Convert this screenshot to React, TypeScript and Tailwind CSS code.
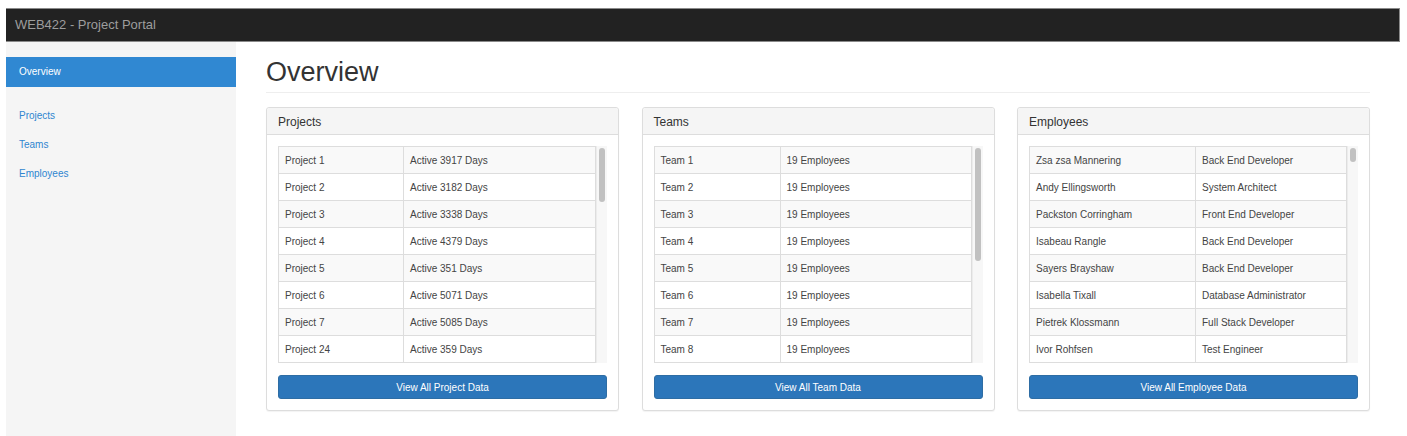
const projects = [
  ['Project 1', 'Active 3917 Days'],
  ['Project 2', 'Active 3182 Days'],
  ['Project 3', 'Active 3338 Days'],
  ['Project 4', 'Active 4379 Days'],
  ['Project 5', 'Active 351 Days'],
  ['Project 6', 'Active 5071 Days'],
  ['Project 7', 'Active 5085 Days'],
  ['Project 24', 'Active 359 Days'],
  ['', ''],
]

const teams = [...Array.from({ length: 8 }, (_, i) => [`Team ${i + 1}`, '19 Employees']), ['', '']]

const employees = [
  ['Zsa zsa Mannering', 'Back End Developer'],
  ['Andy Ellingsworth', 'System Architect'],
  ['Packston Corringham', 'Front End Developer'],
  ['Isabeau Rangle', 'Back End Developer'],
  ['Sayers Brayshaw', 'Back End Developer'],
  ['Isabella Tixall', 'Database Administrator'],
  ['Pietrek Klossmann', 'Full Stack Developer'],
  ['Ivor Rohfsen', 'Test Engineer'],
  ['', ''],
]

function Panel({
  title,
  rows,
  firstCol,
  thumb,
  button,
}: {
  title: string
  rows: string[][]
  firstCol: string
  thumb: string
  button: string
}) {
  return (
    <div className="rounded-[3px] border border-[#dddddd] bg-white shadow-[0_1px_1px_rgba(0,0,0,0.05)]">
      <div className="h-[27px] rounded-t-[3px] border-b border-[#dddddd] bg-[#f5f5f5] px-[11px] text-[12px] leading-[28px] text-[#333]">
        {title}
      </div>
      <div className="p-[11px]">
        <div className="flex h-[217px] overflow-hidden">
          <div className="flex-1 overflow-hidden">
            <table className="w-full border-collapse border border-[#dddddd] text-[10px] text-[#444]">
              <tbody>
                {rows.map((r, i) => (
                  <tr key={i} className={i % 2 === 0 ? 'bg-[#f9f9f9]' : 'bg-white'}>
                    <td className={`h-[27px] border border-[#dddddd] pl-[6px] ${firstCol}`}>{r[0]}</td>
                    <td className="h-[27px] border border-[#dddddd] pl-[6px]">{r[1]}</td>
                  </tr>
                ))}
              </tbody>
            </table>
          </div>
          <div className="w-[11px] shrink-0 border-l border-[#ececec] bg-[#f7f7f7] pt-[2px]">
            <div className={`ml-[2px] w-[6px] rounded-full bg-[#c1c1c1] ${thumb}`} />
          </div>
        </div>
        <button className="mt-[12px] h-[24px] w-full rounded-[3px] border border-[#2e6da4] bg-[#2c76ba] text-[10px] text-white">
          {button}
        </button>
      </div>
    </div>
  )
}

export default function App() {
  return (
    <div className="h-[436px] w-[1407px] bg-white pl-[6px] pr-[7px] pt-[8px] font-['Liberation_Sans',Arial,sans-serif]">
      <nav className="flex h-[34px] items-center border-y border-r border-[#8a8a8a] bg-[#222] px-[9px] text-[13px] text-[#9d9d9d]">
        WEB422 - Project Portal
      </nav>
      <div className="flex">
        <aside className="h-[394px] w-[230px] shrink-0 bg-[#f5f5f5] pt-[15px] text-[10px]">
          <div className="h-[30px] bg-[#3088d2] pl-[13px] leading-[30px] text-white">Overview</div>
          <ul className="mt-[14px] text-[#2f86d0]">
            <li className="h-[29px] pl-[13px] leading-[29px]">Projects</li>
            <li className="h-[29px] pl-[13px] leading-[29px]">Teams</li>
            <li className="h-[29px] pl-[13px] leading-[29px]">Employees</li>
          </ul>
        </aside>
        <main className="flex-1 px-[30px] pt-[15px]">
          <h1 className="border-b border-[#eeeeee] pb-[5px] text-[27px] leading-[30px] text-[#333]">Overview</h1>
          <div className="mt-[14px] grid grid-cols-3 gap-[22.5px]">
            <Panel
              title="Projects"
              rows={projects}
              firstCol="w-[125px]"
              thumb="h-[54px]"
              button="View All Project Data"
            />
            <Panel title="Teams" rows={teams} firstCol="w-[126px]" thumb="h-[113px]" button="View All Team Data" />
            <Panel
              title="Employees"
              rows={employees}
              firstCol="w-[166px]"
              thumb="h-[14px]"
              button="View All Employee Data"
            />
          </div>
        </main>
      </div>
    </div>
  )
}
